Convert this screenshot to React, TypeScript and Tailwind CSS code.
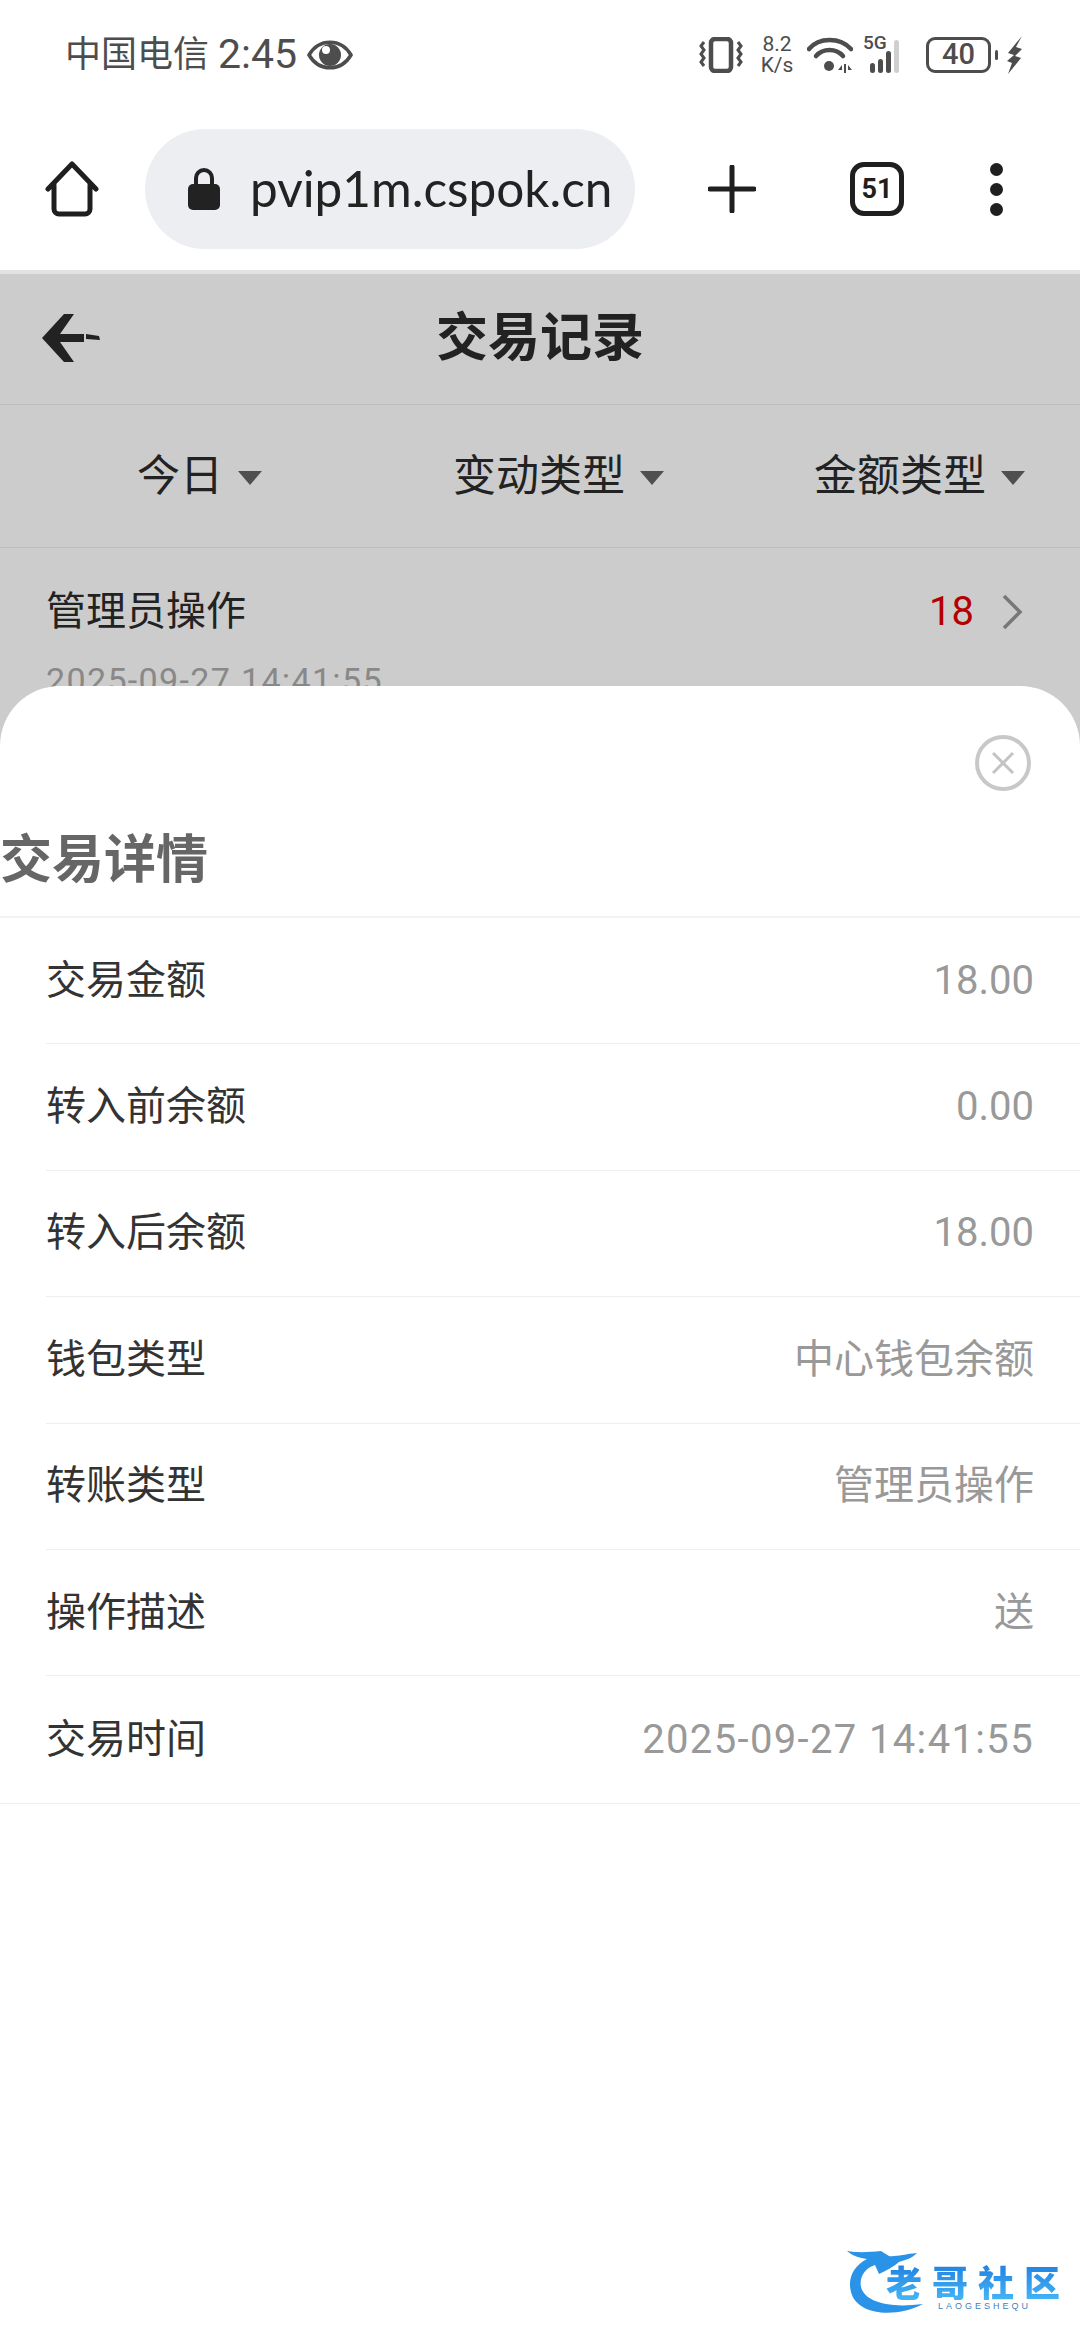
const cjk = "font-['Roboto','Noto_Sans_CJK_SC',sans-serif]";

const details = [
  { label: "交易金额", value: "18.00" },
  { label: "转入前余额", value: "0.00" },
  { label: "转入后余额", value: "18.00" },
  { label: "钱包类型", value: "中心钱包余额" },
  { label: "转账类型", value: "管理员操作" },
  { label: "操作描述", value: "送" },
  { label: "交易时间", value: "2025-09-27 14:41:55", wide: true },
];

function StatusIcons() {
  return (
    <div className="flex items-center text-[#4d4d4d]">
      <svg width="44" height="36" viewBox="0 0 44 36" fill="none" stroke="currentColor">
        <rect x="12" y="2" width="20" height="32" rx="4" strokeWidth="4.5" />
        <path d="M5 5l-3 4 3 4-3 4 3 4-3 4 3 4M39 5l3 4-3 4 3 4-3 4 3 4-3 4" strokeWidth="3" />
      </svg>
      <div className="ml-[16px] flex w-[36px] flex-col items-center text-[21px] leading-[21px]">
        <span>8.2</span>
        <span>K/s</span>
      </div>
      <svg className="ml-[12px]" width="46" height="36" viewBox="0 0 46 36" fill="currentColor">
        <path d="M2 12C12 0 33 0 44 12" fill="none" stroke="currentColor" strokeWidth="4.5" strokeLinecap="round" />
        <path d="M9 19C16 11 29 11 36 19" fill="none" stroke="currentColor" strokeWidth="4.5" strokeLinecap="round" />
        <circle cx="22" cy="29" r="5" />
        <path d="M31 33l4-5v5zM37 27h2v9h-2zM41 28l4 5h-4z" />
      </svg>
      <div className="relative ml-[10px] h-[36px] w-[50px]">
        <span className="absolute left-0 top-[-4px] text-[19px] leading-[20px] font-medium">5G</span>
        <div className="absolute bottom-0 left-[7px] flex items-end gap-[3px]">
          <i className="h-[10px] w-[5px] rounded-full bg-[#4d4d4d]" />
          <i className="h-[14px] w-[5px] rounded-full bg-[#4d4d4d]" />
          <i className="h-[22px] w-[5px] rounded-full bg-[#4d4d4d]" />
          <i className="h-[33px] w-[5px] rounded-full bg-[#cfcfcf]" />
        </div>
      </div>
      <div className="ml-[13px] flex h-[36px] w-[65px] items-center justify-center rounded-[9px] border-[3px] border-[#4d4d4d] text-[29px] leading-none font-medium">
        40
      </div>
      <i className="ml-[4px] h-[10px] w-[3px] rounded-full bg-[#4d4d4d]" />
      <svg className="ml-[7px]" width="19" height="38" viewBox="0 0 19 38" fill="currentColor">
        <path d="M17 0L3 17l6 2-7 6 5 2-4 11 13-16-6-2 7-7-6-2z" />
      </svg>
    </div>
  );
}

function Toolbar() {
  return (
    <div className="mt-[20px] flex h-[120px] items-center">
      <svg className="ml-[45px]" width="54" height="56" viewBox="0 0 54 56" fill="none" stroke="#1f1f1f" strokeWidth="5" strokeLinejoin="round" strokeLinecap="round">
        <path d="M3 28L27 3l24 25M9 24v24a5 5 0 0 0 5 5h26a5 5 0 0 0 5-5V24" />
      </svg>
      <div className="ml-[46px] flex h-[120px] w-[490px] items-center rounded-full bg-[#eceef1]">
        <svg className="ml-[43px]" width="32" height="44" viewBox="0 0 32 44" fill="#222">
          <path d="M8 20v-9a8 8 0 0 1 16 0v9" fill="none" stroke="#222" strokeWidth="4" />
          <rect x="0" y="17" width="32" height="26" rx="5" />
        </svg>
        <span className="ml-[30px] font-['Lato',sans-serif] text-[49.5px] leading-none text-[#222]">pvip1m.cspok.cn</span>
      </div>
      <svg className="ml-[73px]" width="48" height="48" viewBox="0 0 48 48" stroke="#1f1f1f" strokeWidth="5" strokeLinecap="round">
        <path d="M24 2v44M2 24h44" />
      </svg>
      <div className="ml-[94px] flex h-[54px] w-[54px] items-center justify-center rounded-[14px] border-[5px] border-[#1f1f1f] font-['Roboto',sans-serif] text-[27px] font-bold text-[#1f1f1f]">
        51
      </div>
      <div className="ml-[86px] flex flex-col gap-[7px]">
        <i className="h-[13px] w-[13px] rounded-full bg-[#1f1f1f]" />
        <i className="h-[13px] w-[13px] rounded-full bg-[#1f1f1f]" />
        <i className="h-[13px] w-[13px] rounded-full bg-[#1f1f1f]" />
      </div>
    </div>
  );
}

function Caret() {
  return <i className="ml-[15px] mt-[4px] h-0 w-0 border-x-[12px] border-t-[14px] border-x-transparent border-t-[#4f4f4f]" />;
}

function Logo() {
  return (
    <div className="absolute left-[845px] top-[2245px] h-[70px] w-[230px]">
      <svg className="absolute left-0 top-0" width="90" height="70" viewBox="0 0 90 70" fill="#2a93e8">
        <path d="M2 6c12 2 22 1 34 0l8 5c6 1 16-2 28-3-6 6-12 7-18 9-6 5-12 8-20 12l-4-9c-10 3-16 12-14 22 3 13 24 22 62 17-26 14-66 12-72-12C2 32 10 20 22 14 14 13 8 11 2 6z" />
      </svg>
      <span className="absolute left-[41px] top-[17px] whitespace-nowrap bg-gradient-to-b from-[#1f7fe0] to-[#45b4f5] bg-clip-text font-['Noto_Sans_CJK_SC',sans-serif] text-[36px] leading-[38px] font-black tracking-[10px] text-transparent">
        老哥社区
      </span>
      <span className="absolute left-[93px] top-[56px] whitespace-nowrap font-['Liberation_Sans',sans-serif] text-[9px] leading-[10px] tracking-[3px] text-[#3f7fc0]">
        LAOGESHEQU
      </span>
    </div>
  );
}

export default function App() {
  return (
    <div className={`relative h-[2340px] w-[1080px] overflow-hidden bg-white ${cjk}`}>
      <div className="flex h-[109px] items-center justify-between pl-[65px] pr-[56px] text-[#4d4d4d]">
        <div className="flex items-center">
          <span className="text-[36px] leading-none">中国电信</span>
          <span className="ml-[9px] text-[41px] leading-none">2:45</span>
          <svg className="ml-[10px]" width="46" height="32" viewBox="0 0 46 32">
            <path d="M2 16C12 -1 34 -1 44 16 34 33 12 33 2 16z" fill="none" stroke="#4d4d4d" strokeWidth="3.5" />
            <circle cx="23" cy="16" r="11" fill="#4d4d4d" />
            <circle cx="19" cy="11" r="4" fill="#fff" />
          </svg>
        </div>
        <StatusIcons />
      </div>
      <Toolbar />
      <div className="mt-[21px] h-[4px] bg-[#e2e2e2]" />

      <div className="h-[2000px] bg-[#cccccc] text-[#222]">
        <header className="relative flex h-[131px] items-center justify-center border-b border-[#bebebe]">
          <svg className="absolute left-[42px] top-[40px]" width="60" height="48" viewBox="0 0 60 48" fill="#222">
            <path d="M22 0h10L18 20h24v8H18l14 20H22L0 24zM44 20l13 2 1 4-14-1z" />
          </svg>
          <h1 className="text-[52px] leading-none font-bold">交易记录</h1>
        </header>
        <div className="flex h-[143px] items-center border-b border-[#bebebe] pl-[137px] text-[43px] leading-none">
          <span>今日</span>
          <Caret />
          <span className="ml-[191px]">变动类型</span>
          <Caret />
          <span className="ml-[150px]">金额类型</span>
          <Caret />
        </div>
        <div className="pl-[46px] pr-[57px] pt-[42px]">
          <div className="flex items-center justify-between">
            <span className="text-[40px] leading-[44px]">管理员操作</span>
            <div className="flex items-center">
              <span className="text-[40px] leading-[44px] text-[#b40000]">18</span>
              <svg className="ml-[27px]" width="22" height="36" viewBox="0 0 22 36" fill="none" stroke="#777" strokeWidth="3.5">
                <path d="M3 2l16 16L3 34" />
              </svg>
            </div>
          </div>
          <div className="mt-[26px] text-[34px] leading-[40px] tracking-[1.35px] text-[#888]">2025-09-27 14:41:55</div>
        </div>
      </div>

      <section className="absolute inset-x-0 bottom-0 top-[686px] rounded-t-[60px] bg-white">
        <div className="flex justify-end pr-[49px] pt-[49px]">
          <svg width="56" height="56" viewBox="0 0 56 56" fill="none" stroke="#c8c8c8" strokeWidth="4">
            <circle cx="28" cy="28" r="26" />
            <path d="M18 18l20 20M38 18L18 38" stroke="#c4c4c4" strokeWidth="3" />
          </svg>
        </div>
        <h2 className="mt-[41px] h-[86px] border-b-2 border-[#f3f3f3] text-[52px] leading-[58px] font-bold text-[#666]">交易详情</h2>
        <ul>
          {details.map((row, index) => (
            <li key={row.label} className={index === details.length - 1 ? "border-b border-[#eeeeee]" : ""}>
              <div className={`ml-[46px] flex h-[126.4px] items-center justify-between pr-[46px] text-[40px] leading-none ${index === details.length - 1 ? "" : "border-b border-[#eeeeee]"}`}>
                <span className="text-[#333]">{row.label}</span>
                <span className={row.wide ? "tracking-[1.35px] text-[#999]" : "text-[#999]"}>{row.value}</span>
              </div>
            </li>
          ))}
        </ul>
      </section>
      <Logo />
    </div>
  );
}
